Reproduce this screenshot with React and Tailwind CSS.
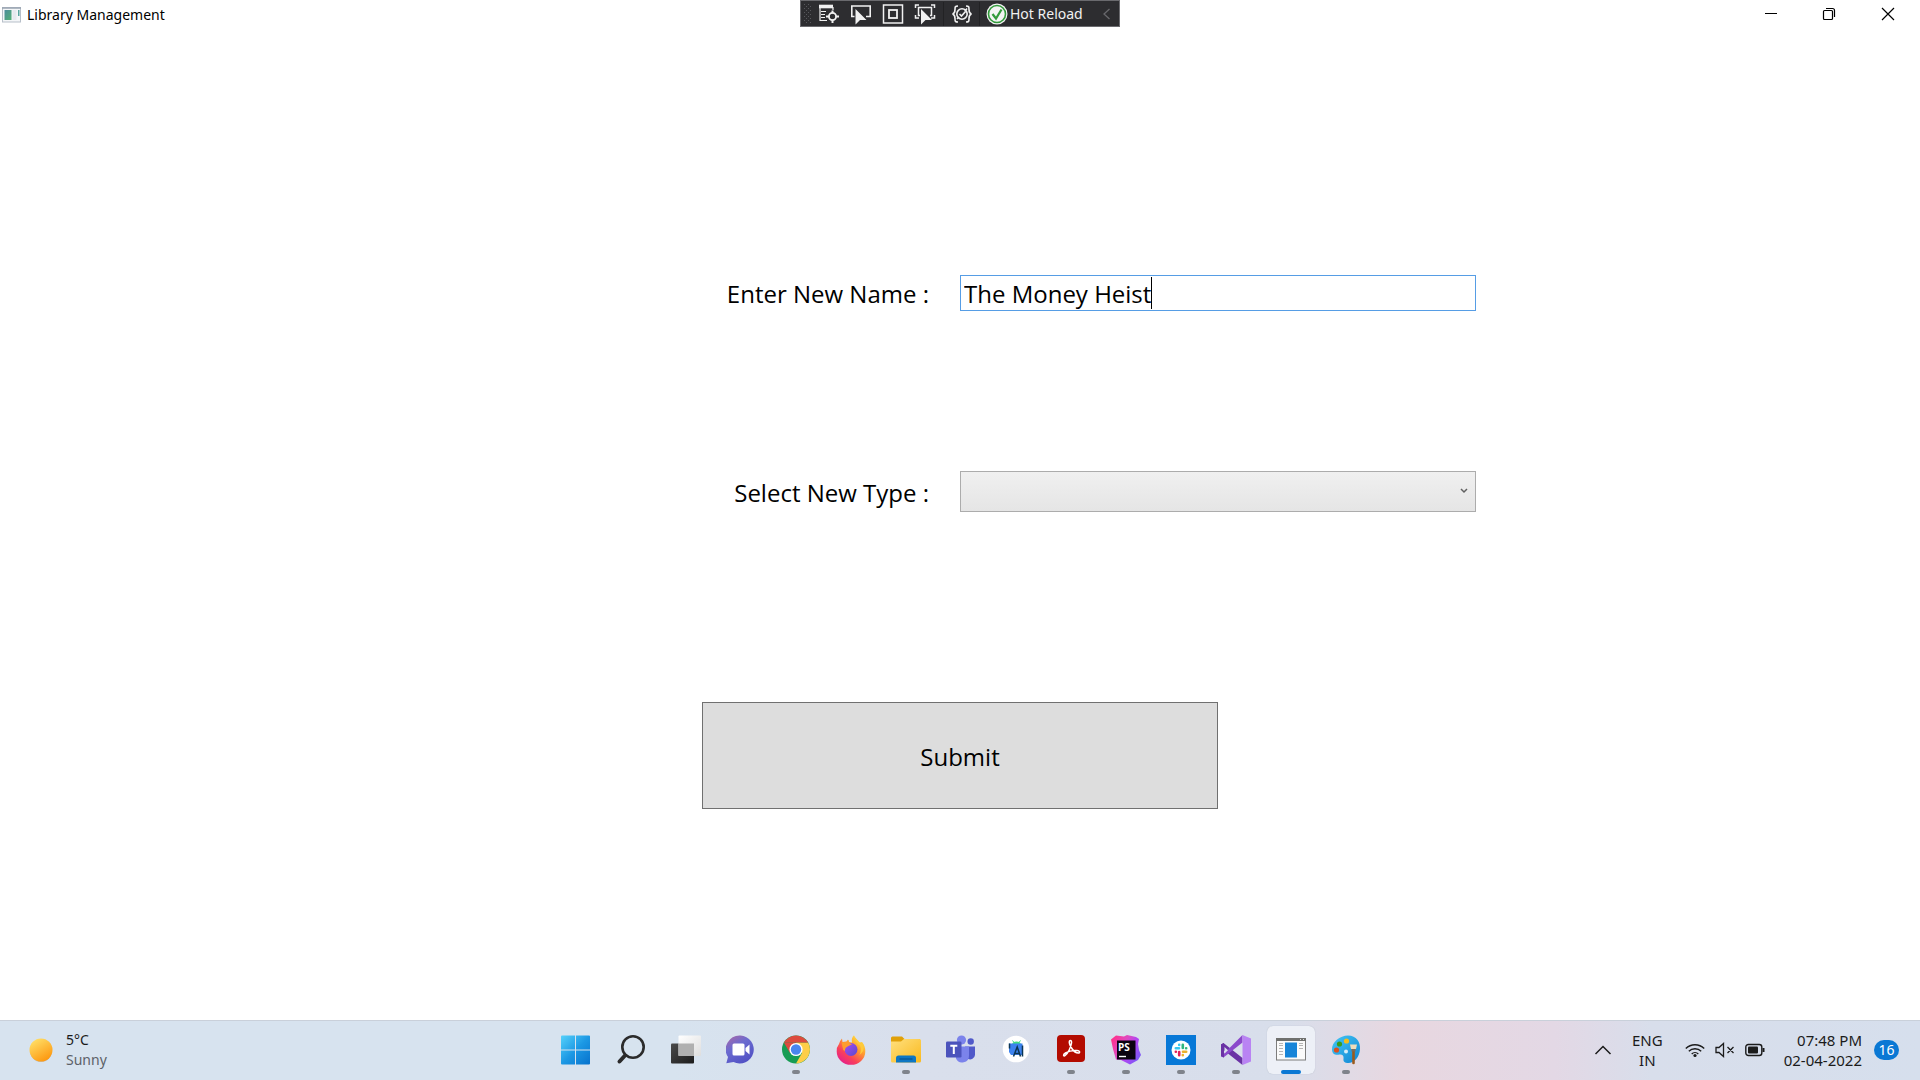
import React from "react";

const FONT = "font-['Noto_Sans',sans-serif]";

/* ---------- live visual tree toolbar ---------- */

function TreeIcon() {
  return (
    <svg width="22" height="22" viewBox="0 0 22 22" fill="none" stroke="#f1f1f1">
      <path d="M1 3.5h14" strokeWidth="3.600" />
      <path d="M2 3v15M3 8.500h5M3 11.500h4M3 14.500h4M2 17.500h7M15 4v3" strokeWidth="1.200" />
      <circle cx="14.500" cy="13.500" r="3.600" strokeWidth="1.800" />
      <path d="M14.500 7.500v3M14.500 16.500v3.500M8 13.500h3.500M17.500 13.500h3.500" strokeWidth="2" />
    </svg>
  );
}

function SelectElementIcon() {
  return (
    <svg width="22" height="22" viewBox="0 0 22 22" fill="none" stroke="#f1f1f1" strokeWidth="1.6">
      <path d="M4.500 13.500H1.800V3h18.400v10.500H16" />
      <path d="M5.500 6v15.500l4.500-4.500h6.500z" fill="#f1f1f1" stroke="none" />
    </svg>
  );
}

function AdornersIcon() {
  return (
    <svg width="22" height="22" viewBox="0 0 22 22" fill="none" stroke="#f1f1f1">
      <rect x="1.500" y="2" width="19" height="18" strokeWidth="1.500" />
      <rect x="7" y="7" width="8" height="8" strokeWidth="1.800" />
    </svg>
  );
}

function TrackFocusIcon() {
  return (
    <svg width="22" height="22" viewBox="0 0 22 22" fill="none" stroke="#f1f1f1" strokeWidth="1.500">
      <path d="M1.500 5V2H5M17 2h3.500v3M1.500 12v3H5M17 15h3.500v-3" />
      <path d="M6 12.500H4.500v-8h13v8H16" />
      <path d="M7 6v15.500l4.500-4.500H18z" fill="#f1f1f1" stroke="none" />
    </svg>
  );
}

function BindingIcon() {
  return (
    <svg width="22" height="22" viewBox="0 0 22 22" fill="none" stroke="#f1f1f1" strokeWidth="1.600">
      <path d="M7 3C4 3 4 4 4 6.500S3.500 10.500 1.500 11c2 .5 2.500 2 2.500 4.500S4 19 7 19M15 3c3 0 3 1 3 3.500s.5 4 2.500 4.500c-2 .5-2.500 2-2.500 4.500s0 3.500-3 3.500" />
      <circle cx="11" cy="11" r="5.200" />
      <path d="M8.500 11l2 2 4-4.500M6 16l2-2M14 8l2-2.500" />
    </svg>
  );
}

function DebugToolbar() {
  const tools = [
    ["Go to live visual tree", TreeIcon],
    ["Select element", SelectElementIcon],
    ["Display layout adorners", AdornersIcon],
    ["Track focused element", TrackFocusIcon],
  ];
  return (
    <div className="flex h-[27px] w-80 items-center border border-[#6a6a6e] bg-[#2d2d30] pt-px text-[#f1f1f1]">
      <svg width="12" height="22" viewBox="0 0 12 22" fill="#58585c" aria-hidden="true">
        {[1, 5, 9, 13, 17].map((y) => (
          <g key={y}>
            <rect x="3" y={y} width="1" height="1" />
            <rect x="7" y={y} width="1" height="1" />
            <rect x="5" y={y + 2} width="1" height="1" />
            <rect x="9" y={y + 2} width="1" height="1" />
          </g>
        ))}
      </svg>
      {tools.map(([label, Icon]) => (
        <button key={label} aria-label={label} className="flex w-8 justify-center">
          <Icon />
        </button>
      ))}
      <span className="ml-0.5 h-6 w-px bg-[#222224]" />
      <button aria-label="Binding failures" className="flex w-[35px] justify-center">
        <BindingIcon />
      </button>
      <span className="h-6 w-px bg-[#222224]" />
      <button className="ml-1.5 flex items-center gap-0.5 text-sm leading-5 whitespace-nowrap">
        <svg width="22" height="22" viewBox="0 0 22 22" fill="none">
          <circle cx="11" cy="11" r="10.500" fill="#f4f4f4" />
          <circle cx="11" cy="11" r="8.500" stroke="#339b3c" strokeWidth="1.600" />
          <path d="M6.500 11l3.500 4.500 5.500-9" stroke="#339b3c" strokeWidth="2.200" />
        </svg>
        Hot Reload
      </button>
      <button aria-label="Collapse toolbar" className="mr-2 ml-auto">
        <svg width="9" height="14" viewBox="0 0 9 14" fill="none" stroke="#68686c" strokeWidth="1.300">
          <path d="M7.500 2L2 7l5.500 5" />
        </svg>
      </button>
    </div>
  );
}

function TitleBar() {
  return (
    <header className="grid h-7 grid-cols-[1fr_auto_1fr] items-start">
      <div className="flex h-7 items-center gap-[5px] pt-px pl-0.5">
        <svg width="20" height="16" viewBox="0 0 20 16" aria-hidden="true">
          <defs>
            <linearGradient id="appicon" x1="0" x2="1" y1="0" y2="1">
              <stop offset="0" stopColor="#4d8d9d" />
              <stop offset="1" stopColor="#53b175" />
            </linearGradient>
          </defs>
          <rect x=".5" y=".5" width="18" height="14.500" fill="#f4f6f8" stroke="#b7bfc9" />
          <path d="M0 1h19" stroke="#98a3b1" strokeWidth="1.500" />
          <rect x="2.500" y="3" width="7" height="10" fill="url(#appicon)" />
          <rect x="10.500" y="3" width="4" height="10" fill="#e6e9ee" />
          <rect x="16" y="3" width="1.500" height="6" fill="#5aa6a0" />
        </svg>
        <h1 className="text-sm leading-5 text-black">Library Management</h1>
      </div>
      <DebugToolbar />
      <div className="flex h-7 justify-end pr-0.5">
        <button aria-label="Minimize" className="flex w-[58px] items-center justify-center">
          <svg width="14" height="14" viewBox="0 0 14 14" stroke="#000"><path d="M1 6.500h12" /></svg>
        </button>
        <button aria-label="Restore" className="flex w-[58px] items-center justify-center">
          <svg width="14" height="14" viewBox="0 0 14 14" fill="none" stroke="#000" strokeWidth="1.200">
            <rect x="1.500" y="3.500" width="9" height="9" rx="1" />
            <path d="M4 1.500h6.500q2 0 2 2V10" />
          </svg>
        </button>
        <button aria-label="Close" className="flex w-[60px] items-center justify-center">
          <svg width="14" height="14" viewBox="0 0 14 14" stroke="#000" strokeWidth="1.200"><path d="M1 1l12 12M13 1L1 13" /></svg>
        </button>
      </div>
    </header>
  );
}

/* ---------- taskbar icons ---------- */

function StartIcon() {
  return (
    <svg width="30" height="30" viewBox="0 0 30 30">
      <defs>
        <linearGradient id="win" gradientUnits="userSpaceOnUse" x1="0" x2="30" y1="0" y2="30">
          <stop offset="0" stopColor="#56d2fb" />
          <stop offset=".5" stopColor="#1c98e4" />
          <stop offset="1" stopColor="#0670cb" />
        </linearGradient>
      </defs>
      <path fill="url(#win)" d="M1 .5h13v14H0V1.500Q0 .5 1 .5M15 .5h13q1 0 1 1v13H15M0 15.500h14v14H1q-1 0-1-1M15 15.500h14v13q0 1-1 1H15" />
    </svg>
  );
}

function SearchIcon() {
  return (
    <svg width="30" height="30" viewBox="0 0 30 30" fill="none" stroke="#2b2b2b" strokeLinecap="round">
      <circle cx="17" cy="12" r="10.700" strokeWidth="2.600" />
      <path d="M9 20.500L3.500 26.500" strokeWidth="4" />
    </svg>
  );
}

function TaskViewIcon() {
  return (
    <svg width="30" height="30" viewBox="0 0 30 30">
      <defs>
        <linearGradient id="tv" x1="0" x2="1" y1="0" y2="1">
          <stop offset="0" stopColor="#4a4a4a" />
          <stop offset="1" stopColor="#1c1c1c" />
        </linearGradient>
        <linearGradient id="tw" x1="0" x2="1" y1="0" y2="1">
          <stop offset="0" stopColor="#fff" />
          <stop offset="1" stopColor="#dedede" />
        </linearGradient>
      </defs>
      <rect x="0" y="8.500" width="23" height="20" rx="1" fill="url(#tv)" />
      <rect x="7.500" y=".5" width="22.500" height="20.500" rx="1" fill="url(#tw)" />
      <rect x="7.500" y="8.500" width="15.500" height="12.500" fill="#b0b0b0" />
    </svg>
  );
}

function ChatIcon() {
  return (
    <svg width="30" height="30" viewBox="0 0 30 30">
      <defs>
        <linearGradient id="chat" x1=".1" x2=".7" y1="0" y2="1">
          <stop offset="0" stopColor="#a868a8" />
          <stop offset=".4" stopColor="#6b6bd0" />
          <stop offset="1" stopColor="#5050c4" />
        </linearGradient>
      </defs>
      <path fill="url(#chat)" d="M14.500 .5a14 14 0 1 1-7 26.500L.3 28.300l1.700-6.200A14 14 0 0 1 14.500 .5" />
      <rect x="6.500" y="8.500" width="12" height="12" rx="1.500" fill="#fff" />
      <path d="M19.500 13l4-3.500v10l-4-3.500z" fill="#fff" />
    </svg>
  );
}

function ChromeIcon() {
  return (
    <svg width="30" height="30" viewBox="0 0 30 30">
      <circle cx="15" cy="14.500" r="14" fill="#179c54" />
      <path d="M15 7.500h12.100A14 14 0 0 1 15 28.500l6-10.500z" fill="#fdce48" />
      <path d="M2.900 7.500A14 14 0 0 1 27.100 7.500H15z" fill="#dd4b3e" />
      <path d="M2.900 7.500L9 18l6-10.500z" fill="#dd4b3e" />
      <circle cx="15" cy="14.500" r="6.600" fill="#fff" />
      <circle cx="15" cy="14.500" r="5.200" fill="#4a86ee" />
    </svg>
  );
}

function FirefoxIcon() {
  return (
    <svg width="30" height="30" viewBox="0 0 30 30">
      <defs>
        <linearGradient id="fx" x1=".85" x2=".2" y1=".1" y2=".95">
          <stop offset="0" stopColor="#ffe23f" />
          <stop offset=".35" stopColor="#ff9a2e" />
          <stop offset=".7" stopColor="#f9405a" />
          <stop offset="1" stopColor="#e5208b" />
        </linearGradient>
        <linearGradient id="fxi" x1="0" x2="1" y1="0" y2="1">
          <stop offset="0" stopColor="#a84cf0" />
          <stop offset="1" stopColor="#5a48cf" />
        </linearGradient>
      </defs>
      <path fill="url(#fx)" d="M3 9q1-3.500 3-5.500l.5 3.500 4-.5 1.500-2 1 2.500 3 .5Q15 3 18 .3q1 4 5.500 7.200l2.500-.5q3.500 4 3.300 9.500A14.300 13.300 0 0 1 .7 16.500Q.3 12.500 3 9" />
      <circle cx="15" cy="14.500" r="6.500" fill="url(#fxi)" />
      <path fill="#ff9d2e" d="M5.500 7.200l5-.2 2-2 .6 3 2.900 1.200-3.500 1.800q-4 1.500-3.500 5-2.500-1-2.500-4z" />
      <path fill="#ffca3a" d="M18 1q.5 6 6 9.500 2 4.500-.5 9.500 5-3.500 4.200-9.500L26 7.500l-1 1.700z" />
    </svg>
  );
}

function ExplorerIcon() {
  return (
    <svg width="30" height="30" viewBox="0 0 30 30">
      <defs>
        <linearGradient id="fold" x1="0" x2="1" y1="0" y2="1">
          <stop offset="0" stopColor="#ffe07e" />
          <stop offset="1" stopColor="#f9b91e" />
        </linearGradient>
      </defs>
      <path d="M0 3q0-1.500 1.500-1.500H11L13.500 4H29v8H0z" fill="#e0a009" />
      <path d="M0 6.500h10L13 4h15.500Q30 4 30 5.500v20.500q0 1.500-1.500 1.500h-27Q0 27.500 0 26z" fill="url(#fold)" />
      <path d="M5 27.500V23q0-2.500 2.500-2.500h15q2.500 0 2.500 2.500v4.500z" fill="#0d76c3" />
      <path d="M8.500 24h13" stroke="#08538f" strokeWidth="1.200" />
    </svg>
  );
}

function TeamsIcon() {
  return (
    <svg width="30" height="30" viewBox="0 0 30 30">
      <circle cx="15.500" cy="5" r="4.600" fill="#7b83eb" />
      <circle cx="24.700" cy="6.500" r="3.200" fill="#5059c9" />
      <path d="M19 11.500h10v8.500a5 5 0 0 1-7 4z" fill="#5059c9" />
      <path d="M10 11.500h13v9a6.800 6.800 0 0 1-13 3z" fill="#7b83eb" />
      <rect y="6.500" width="15.500" height="16" rx="1.300" fill="#4b53bc" />
      <path d="M4.300 10.800h7M7.800 11v8" stroke="#fff" strokeWidth="2" />
    </svg>
  );
}

function AndroidStudioIcon() {
  return (
    <svg width="30" height="30" viewBox="0 0 30 30">
      <circle cx="15" cy="14" r="13.300" fill="#fff" />
      <path d="M11 9.500q.5-3 4.500-3t4.500 3z" fill="#3ddc84" />
      <path d="M11.500 5.500l1.500 2M19.500 5.500L18 7.500" stroke="#3ddc84" />
      <path d="M8 8.500h13.500V20H10l-2-3z" fill="#3c82ee" />
      <path d="M8.500 8.500v5M12.500 21.500l3.700-9.500 3.300 9.500M13.500 18q2.500 1.200 5 0M21.500 10.500v11" fill="none" stroke="#0b3553" strokeWidth="1.500" />
    </svg>
  );
}

function AcrobatIcon() {
  return (
    <svg width="30" height="30" viewBox="0 0 30 30">
      <rect x="1" y="0" width="28" height="27" rx="4" fill="#b30b00" />
      <path
        d="M14.500 5.500c-2 0-1.300 4 .7 7 2 3.300 5 5.500 7 5.500 2.300 0 1.800-2.300-1.200-2.500-4-.3-9 1-11.500 2.500-3 1.800-2 3.800-.3 2.500C12 18.500 15 12 15.500 8c.2-1.500-.2-2.500-1-2.500z"
        fill="none" stroke="#fff" strokeWidth="1.500"
      />
    </svg>
  );
}

function PhpStormIcon() {
  return (
    <svg width="30" height="30" viewBox="0 0 30 30">
      <defs>
        <linearGradient id="ps" x1="0" x2="1" y1=".2" y2=".8">
          <stop offset="0" stopColor="#ff318c" />
          <stop offset=".35" stopColor="#e04ac0" />
          <stop offset=".6" stopColor="#b345f1" />
          <stop offset="1" stopColor="#765af8" />
        </linearGradient>
      </defs>
      <path d="M0 4.500L5 .5l8 1L16 0l9 2 3 2-1 5 1 6 2 5-3 5-8 4.500-9-4.500-5-.5L2 14z" fill="url(#ps)" />
      <rect x="6" y="5.500" width="18.500" height="19" fill="#0b0310" />
      <text x="7" y="15.500" fill="#fff" fontSize="10" fontWeight="700" fontFamily="Open Sans, sans-serif">PS</text>
      <path d="M8 21.500h7" stroke="#fff" strokeWidth="1.400" />
    </svg>
  );
}

function SlackIcon() {
  return (
    <svg width="30" height="30" viewBox="0 0 30 30" strokeLinecap="round" strokeWidth="2.600">
      <rect width="30" height="30" fill="#0778d7" />
      <circle cx="15" cy="15" r="9.500" fill="#fff" />
      <path d="M9.800 13.200h3.200M13.200 9.800v.1" stroke="#36c5f0" />
      <path d="M16.800 9.800v3.200M20.100 13.200h.1" stroke="#2eb67d" />
      <path d="M17 16.800h3.200M16.800 20.100v.1" stroke="#ecb22e" />
      <path d="M13.200 17v3.200M9.800 16.800h.1" stroke="#e01e5a" />
    </svg>
  );
}

function VisualStudioIcon() {
  return (
    <svg width="30" height="30" viewBox="0 0 30 30">
      <path d="M0 9.500L2.500 8 21.500 23v7L2.500 15 3 20l-3 1.500z" fill="#6a32a5" />
      <path d="M0 21.500L21.500 0v7.500L2.500 22.500z" fill="#8b49cb" />
      <path d="M0 9.500v11.500l3 1.500V8z" fill="#6a32a5" />
      <path d="M21.500 0L30 3.500v23L21.500 30z" fill="#b983f3" />
      <path d="M3.500 12v6.500l3.500-3.300z" fill="#d9dfec" />
    </svg>
  );
}

function WpfAppIcon() {
  return (
    <svg width="30" height="30" viewBox="0 0 30 30">
      <rect x=".5" y="3.500" width="29" height="21.500" fill="#fafafa" stroke="#7d7d7d" />
      <path d="M0 4.500h30" stroke="#6f706e" strokeWidth="3" />
      <path d="M24 4.500h1M27 4.500h1" stroke="#ddd" />
      <path d="M3 8.500h4M3 10.500h4M3 13.500h4M3 16.500h4M3 19.500h4M23 8.500h4M23 10.500h4M23 13.500h4" stroke="#b4b4b4" />
      <rect x="9" y="7.500" width="12" height="15" fill="#1684d8" />
    </svg>
  );
}

function PaintIcon() {
  return (
    <svg width="30" height="30" viewBox="0 0 30 30">
      <defs>
        <linearGradient id="pal" x1="0" x2="1" y1="0" y2="1">
          <stop offset="0" stopColor="#45c8f5" />
          <stop offset="1" stopColor="#0f83d3" />
        </linearGradient>
      </defs>
      <path d="M17 .5C25.500 .5 29.500 7 29 14c-.5 9-7 15-13 14-3-.5-4-2-3.500-4.500.5-3-1.500-4.500-4-4C5 20 1.500 20 1 15 .5 7 9 .5 17 .5z" fill="url(#pal)" />
      <circle cx="8.500" cy="9" r="2.600" fill="#3a9b1d" />
      <circle cx="15.500" cy="6" r="2.600" fill="#f3bd1c" />
      <circle cx="5.500" cy="15" r="2.600" fill="#d9501f" />
      <circle cx="15" cy="16.500" r="2" fill="#d6ecf7" />
      <path d="M22.500 12v16" stroke="#9c5a1c" strokeWidth="2.600" strokeLinecap="round" />
      <path d="M19 9.500h7l-1 4.500h-5z" fill="#efdcbb" />
      <path d="M20.500 14h4v2.500h-4z" fill="#7b6b5c" />
    </svg>
  );
}

const apps = [
  { name: "Start", Icon: StartIcon },
  { name: "Search", Icon: SearchIcon },
  { name: "Task view", Icon: TaskViewIcon },
  { name: "Chat", Icon: ChatIcon },
  { name: "Google Chrome", Icon: ChromeIcon, open: true },
  { name: "Firefox", Icon: FirefoxIcon },
  { name: "File Explorer", Icon: ExplorerIcon, open: true },
  { name: "Microsoft Teams", Icon: TeamsIcon },
  { name: "Android Studio", Icon: AndroidStudioIcon },
  { name: "Adobe Acrobat", Icon: AcrobatIcon, open: true },
  { name: "PhpStorm", Icon: PhpStormIcon, open: true },
  { name: "Slack", Icon: SlackIcon, open: true },
  { name: "Visual Studio", Icon: VisualStudioIcon, open: true },
  { name: "Library Management", Icon: WpfAppIcon, active: true },
  { name: "Paint", Icon: PaintIcon, open: true },
];

function AppButton({ name, Icon, open, active }) {
  return (
    <div className="flex w-[55px] justify-center">
      <button
        aria-label={name}
        className={
          active
            ? "flex h-12 w-12 flex-col items-center rounded-md bg-[#edf0f7] pt-[9px] shadow-[0_0_1px_#a9b0bd]"
            : "flex h-12 w-12 flex-col items-center pt-[9px]"
        }
      >
        <Icon />
        {active && <span className="mt-[5px] h-1 w-5 rounded-full bg-[#0a78d4]" />}
        {open && <span className="mt-[5px] h-1 w-2 rounded-full bg-[#7f838b]" />}
      </button>
    </div>
  );
}

function Taskbar() {
  return (
    <footer className="grid h-[60px] grid-cols-[1fr_auto_1fr] items-center border-t border-[#c9d0da] bg-[linear-gradient(90deg,#d7e3ef_0%,#d7e3ef_35%,#d9dfec_48%,#d8deeb_67%,#e8d7e0_73%,#e3d8e5_81%,#d8deeb_86%,#d6dfed_100%)] pb-px text-[#1b1b1b]">
      <button className="flex items-center gap-[13px] pl-[29px] text-left text-sm leading-5">
        <svg width="24" height="26" viewBox="0 0 24 26" aria-hidden="true">
          <defs>
            <linearGradient id="sun" x1=".2" x2=".8" y1="0" y2="1">
              <stop offset="0" stopColor="#ffe169" />
              <stop offset="1" stopColor="#fd9309" />
            </linearGradient>
          </defs>
          <circle cx="12" cy="14" r="11" fill="#b9bfc6" />
          <circle cx="12" cy="13" r="11.500" fill="url(#sun)" />
        </svg>
        <span>
          <span className="block">5°C</span>
          <span className="block text-[#5c6168]">Sunny</span>
        </span>
      </button>
      <nav aria-label="Taskbar" className="flex pl-px">
        {apps.map((app) => (
          <AppButton key={app.name} {...app} />
        ))}
      </nav>
      <div className="flex items-center justify-end pr-[21px] text-[15px] leading-5">
        <button aria-label="Show hidden icons" className="mr-5">
          <svg width="18" height="12" viewBox="0 0 18 12" fill="none" stroke="#1b1b1b" strokeWidth="1.500">
            <path d="M1.500 10L9 2.500l7.500 7.500" />
          </svg>
        </button>
        <button className="mr-[22px] text-center">
          <span className="block">ENG</span>
          <span className="block">IN</span>
        </button>
        <button aria-label="Network, volume and battery" className="mr-[19px] flex items-center gap-2.5">
          <svg width="20" height="16" viewBox="0 0 20 16" fill="none" stroke="#1b1b1b" strokeWidth="1.400">
            <path d="M.8 6.500a13 13 0 0 1 18.400 0M3.800 9.300a8.800 8.800 0 0 1 12.400 0M6.700 12a4.700 4.700 0 0 1 6.600 0" />
            <circle cx="10" cy="13.500" r="1.600" fill="#1b1b1b" stroke="none" />
          </svg>
          <svg width="20" height="16" viewBox="0 0 20 16" fill="none" stroke="#1b1b1b" strokeWidth="1.300">
            <path d="M1 5.500h3L8.500 1.500v13L4 10.500H1zM12.500 5l6 6M18.500 5l-6 6" />
          </svg>
          <svg width="20" height="14" viewBox="0 0 20 14" fill="none" stroke="#1b1b1b" strokeWidth="1.400">
            <rect x=".8" y="1.500" width="16" height="11" rx="2.500" />
            <rect x="3" y="3.500" width="10" height="7" rx="1" fill="#1b1b1b" stroke="none" />
            <path d="M18.500 5v4" strokeWidth="2" />
          </svg>
        </button>
        <button className="mr-3 text-right">
          <span className="block">07:48 PM</span>
          <span className="block">02-04-2022</span>
        </button>
        <button aria-label="16 notifications" className="h-5 w-[25px] rounded-full bg-[#0a78d4] text-center text-sm leading-5 text-white">
          16
        </button>
      </div>
    </footer>
  );
}

/* ---------- page ---------- */

export default function App() {
  return (
    <div className={`flex min-h-screen flex-col bg-white text-black ${FONT}`}>
      <TitleBar />
      <main className="flex-1">
        <form
          className="flex flex-col pt-[247px] font-['Open_Sans',sans-serif] text-2xl leading-8"
          onSubmit={(e) => e.preventDefault()}
        >
          <div className="grid grid-cols-2 items-center">
            <label htmlFor="name" className="pt-0.5 pr-[31px] text-right">Enter New Name :</label>
            <div className="flex h-9 w-full max-w-[516px] items-center border border-[#569de5] pl-[3px]">
              <input
                id="name"
                type="text"
                defaultValue="The Money Heist"
                className="field-sizing-content h-8 max-w-full bg-transparent pt-0.5 outline-none"
              />
              <span className="h-8 w-px bg-black" />
            </div>
          </div>
          <div className="mt-40 grid grid-cols-2 items-center">
            <label htmlFor="type" className="pt-0.5 pr-[31px] text-right">Select New Type :</label>
            <div className="relative w-full max-w-[516px]">
              <select
                id="type"
                defaultValue=""
                className="block h-[41px] w-full appearance-none border border-[#acacac] bg-linear-to-b from-[#f0f0f0] to-[#e5e5e5] px-2"
              >
                <option value=""></option>
              </select>
              <svg className="pointer-events-none absolute top-[17px] right-2" width="8" height="6" viewBox="0 0 8 6" fill="none" stroke="#606060" strokeWidth="1.500" aria-hidden="true">
                <path d="M1 1l3 3 3-3" />
              </svg>
            </div>
          </div>
          <button
            type="submit"
            className="mt-[190px] h-[107px] w-full max-w-[516px] self-center border border-[#707070] bg-[#dddddd] pt-0.5"
          >
            Submit
          </button>
        </form>
      </main>
      <Taskbar />
    </div>
  );
}
